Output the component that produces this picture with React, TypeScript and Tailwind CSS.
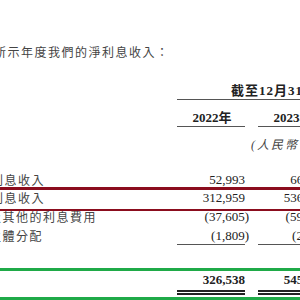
const serif = { fontFamily: '"Liberation Serif", "Noto Sans CJK TC", serif' };
const cjk = { fontFamily: '"Noto Sans CJK TC", "Liberation Serif", serif' };

type Row = {
  label: string;
  shift: string;
  h: string;
  values: string[];
  underline?: boolean;
};

const rows: Row[] = [
  { label: "存款利息收入", shift: "ml-[-36px]", h: "h-[18px]", values: ["52,993", "66,412", "71,205"] },
  { label: "貸款利息收入", shift: "ml-[-36px]", h: "h-[17px]", values: ["312,959", "536,874", "602,331"] },
  { label: "借款及其他的利息費用", shift: "ml-[-38px]", h: "h-[22px]", values: ["(37,605)", "(59,016)", "(61,482)"] },
  { label: "向結構化主體分配", shift: "ml-[-65px]", h: "h-[16px]", values: ["(1,809)", "(2,735)", "(3,104)"], underline: true },
];

function Cols({ children }: { children: React.ReactNode }) {
  return <div className="flex gap-[13px] shrink-0">{children}</div>;
}

export default function App() {
  return (
    <div className="w-[300px] h-[300px] overflow-hidden relative bg-white text-[#222]">
      <div className="pt-[44px]">
        <div
          className="ml-[-60px] whitespace-nowrap text-[12px] leading-[16px] tracking-[1.5px] text-[#444]"
          style={cjk}
        >
          下表載列所示年度我們的淨利息收入：
        </div>

        {/* header */}
        <div className="flex mt-[23px]">
          <div className="w-[177px] shrink-0" />
          <div
            className="w-[230px] shrink-0 pl-[6px] text-center text-[13px] leading-[16px] font-bold border-b border-[#555] tracking-[1px]"
            style={serif}
          >
            截至12月31日止年度
          </div>
        </div>
        <div className="flex mt-[10px]">
          <div className="w-[177px] shrink-0" />
          <Cols>
            {["2022年", "2023年", "2024年"].map((y) => (
              <div
                key={y}
                className="w-[68px] pl-[2px] text-center text-[13px] leading-[16px] font-bold border-b border-[#555]"
                style={serif}
              >
                {y}
              </div>
            ))}
          </Cols>
        </div>
        <div className="flex mt-[10px]">
          <div className="w-[177px] shrink-0" />
          <div
            className="w-[230px] shrink-0 text-center text-[12px] leading-[16px] italic tracking-[2px] text-[#444]"
            style={serif}
          >
            (人民幣千元)
          </div>
        </div>

        {/* body */}
        <div className="mt-[18px]">
          {rows.map((r) => (
            <div key={r.label} className={`flex items-center ${r.h}`}>
              <div className="w-[177px] shrink-0">
                <div
                  className={`${r.shift} whitespace-nowrap text-[12px] leading-[16px] tracking-[1.5px] text-[#444]`}
                  style={cjk}
                >
                  {r.label}
                </div>
              </div>
              <Cols>
                {r.values.map((v, i) => (
                  <div
                    key={i}
                    className={`w-[68px] text-right text-[13px] leading-[16px] ${
                      r.underline ? "border-b border-[#555]" : ""
                    }`}
                    style={serif}
                  >
                    {v.startsWith("(") ? <span className="mr-[-4px]">{v}</span> : v}
                  </div>
                ))}
              </Cols>
            </div>
          ))}
        </div>

        {/* total */}
        <div className="flex mt-[28px]">
          <div className="w-[177px] shrink-0" />
          <Cols>
            {["326,538", "545,535", "608,950"].map((v) => (
              <div key={v} className="w-[68px]">
                <div className="text-right text-[13px] leading-[16px] font-bold" style={serif}>
                  {v}
                </div>
                <div className="mt-[2px] h-[2px] bg-[#222]" />
                <div className="mt-[1px] h-[2px] bg-[#222]" />
              </div>
            ))}
          </Cols>
        </div>
      </div>

      {/* highlight boxes */}
      <div className="absolute left-[-10px] right-[-10px] top-[187px] h-[24px] border-t-[3px] border-b-[2px] border-[#8b0d1e]" />
      <div className="absolute left-[-10px] right-[-10px] top-[268px] h-[32px] border-t-[3px] border-b-[3px] border-[#1faa48]" />
    </div>
  );
}
